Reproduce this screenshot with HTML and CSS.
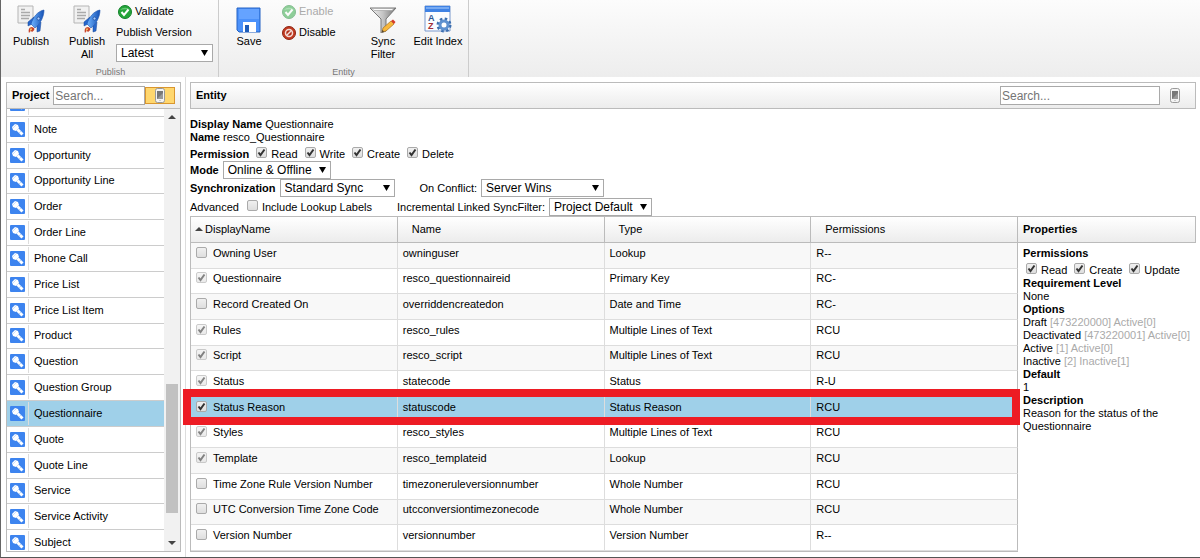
FILE: index.html
```html
<!DOCTYPE html>
<html lang="en">
  <head>
    <meta charset="UTF-8" />
    <meta name="viewport" content="width=device-width, initial-scale=1.0" />
    <title>Entity - Questionnaire</title>
    <link rel="stylesheet" href="styles.css">
  </head>
  <body>
    <!-- Shared icons -->
    <svg class="defs" aria-hidden="true">
      <defs>
        <linearGradient id="blue" x1="0" y1="0" x2="1" y2="0">
          <stop offset="0" stop-color="#6fb4ff" />
          <stop offset="1" stop-color="#1450b4" />
        </linearGradient>
        <linearGradient id="grey" x1="0" y1="0" x2="1" y2="0">
          <stop offset="0" stop-color="#f4f4f4" />
          <stop offset="0.5" stop-color="#c4c4c4" />
          <stop offset="1" stop-color="#777" />
        </linearGradient>
        <symbol id="publish" viewBox="0 0 28 28">
          <path d="M1 1h15v17H1z" fill="#f1f1f1" stroke="#b5b5b5" />
          <path d="M4 4.500h4M4 7.500h9M4 10.500h9M4 13.500h8" stroke="#aaa" stroke-width="1.500" />
          <path d="M15 22c-3 0-4 3-3 6 1-1 1-2 2-2l1 1c2-1 3-3 2-4z" fill="#c8452c" />
          <path d="M14 23c-1 1-1 2-1 3 1-1 2-1 2-2z" fill="#ffd36b" />
          <path d="M17 12l-6 5v4l6-3zM24 17l-1 9-3 1v-6z" fill="#2767cc" stroke="#174796" stroke-width=".5" />
          <path d="M27 5c-6 1-11 7-13 14l4 4c5-4 9-11 9-18z" fill="url(#blue)" stroke="#1c54ae" stroke-width=".6" />
          <circle cx="21.500" cy="13.500" r="1.500" fill="#a9ccff" stroke="#174796" stroke-width=".7" />
        </symbol>
        <symbol id="ok" viewBox="0 0 14 14">
          <circle cx="7" cy="7" r="6.500" fill="#25a53a" stroke="#12822a" />
          <path d="M2 5a6 5 0 0 1 10 0c-3-1-7-1-10 0z" fill="#7fd68a" opacity=".7" />
          <path d="M3.500 7l2.500 3 4.500-5.500" fill="none" stroke="#fff" stroke-width="2" />
        </symbol>
        <symbol id="phone" viewBox="0 0 10 15">
          <rect x=".5" y=".5" width="9" height="14" rx="2" fill="#f3f3f3" stroke="#999" />
          <path d="M2 3h6v8H2z" fill="#777" />
          <path d="M2 11l6-6v6z" fill="#999" />
          <path d="M4 12.500h2" stroke="#ccc" />
        </symbol>
        <symbol id="entity" viewBox="0 0 15 15">
          <rect width="15" height="15" rx="1" fill="#3d84ef" />
          <path d="M2 5l3-3 3 1 1 3-3 3-3-1z" fill="#fff" />
          <path d="M2.500 6.500l4-4" stroke="#a9cbfb" stroke-width=".6" />
          <path d="M7.500 7.500l5 5" stroke="#fff" stroke-width="3" />
          <path d="M9 11l2-2" stroke="#a9cbfb" stroke-width=".7" />
        </symbol>
      </defs>
    </svg>

    <!-- Ribbon Section -->
    <header class="ribbon">
      <section class="group">
        <div class="tools">
          <button class="tool"><svg class="icon-lg"><use href="#publish" /></svg>Publish</button>
          <button class="tool"><svg class="icon-lg"><use href="#publish" /></svg>Publish<br />All</button>
          <div class="tool-list">
            <button class="small-tool"><svg class="icon-sm"><use href="#ok" /></svg>Validate</button>
            <label for="version">Publish Version</label>
            <select id="version"><option>Latest</option></select>
          </div>
        </div>
        <h2>Publish</h2>
      </section>
      <section class="group">
        <div class="tools">
          <button class="tool wide">
            <svg class="icon-lg" viewBox="0 0 28 28">
              <path d="M2 3h23v24H4l-2-2z" fill="#4b91fa" stroke="#2463c4" />
              <path d="M4 4h20v10H4z" fill="#65a3ff" />
              <path d="M8 17h13v10H8z" fill="#fff" />
              <path d="M10 20h4v7h-4z" fill="#1f5cb8" />
            </svg>Save
          </button>
          <div class="tool-list">
            <button class="small-tool" disabled><svg class="icon-sm"><use href="#ok" /></svg>Enable</button>
            <button class="small-tool">
              <svg class="icon-sm" viewBox="0 0 14 14">
                <circle cx="7" cy="7" r="6.500" fill="#c23b22" stroke="#8e2412" />
                <circle cx="7" cy="7" r="3.500" fill="#b3311b" stroke="#f3ddd8" stroke-width="1.500" />
                <path d="M4.500 9.500l5-5" stroke="#f3ddd8" stroke-width="1.500" />
              </svg>Disable
            </button>
          </div>
          <button class="tool narrow">
            <svg class="icon-lg" viewBox="0 0 28 28">
              <path d="M1 3h26L17 14v12l-5 2V14z" fill="url(#grey)" stroke="#777" />
              <path d="M3 3.500h22l-2 2H5z" fill="#fafafa" stroke="#999" stroke-width=".6" />
              <path d="M13 27l1-4 8-7 3 3-8 7z" fill="#f8b83c" stroke="#a7701d" stroke-width=".7" />
              <path d="M22 16l2-1.500 2.500 2.500-1.500 2z" fill="#d63b28" />
              <path d="M13 27l.5-2 1.500 1.500z" fill="#333" />
            </svg>Sync<br />Filter
          </button>
          <button class="tool wide">
            <svg class="icon-lg" viewBox="0 0 28 28">
              <path d="M1 1h25v25H1z" fill="#fafcff" stroke="#7898cc" />
              <path d="M1 1h25v6H1z" fill="#3f82e4" />
              <path d="M2 2h23v2H2z" fill="#77aaf2" />
              <text class="az-a" x="4" y="16">A</text>
              <text class="az-z" x="4" y="24">Z</text>
              <circle cx="20" cy="20" r="6" fill="none" stroke="#3c6eae" stroke-width="3" stroke-dasharray="2.400 2.310" />
              <circle cx="20" cy="20" r="4" fill="#fff" stroke="#5f91cf" stroke-width="3" />
            </svg>Edit Index
          </button>
        </div>
        <h2>Entity</h2>
      </section>
    </header>

    <div class="workspace">
      <!-- Sidebar Section -->
      <aside class="sidebar">
        <div class="bar project-bar">
          <label for="projectSearch">Project</label>
          <input type="text" id="projectSearch" placeholder="Search..." />
          <button class="phone-btn active" aria-label="Mobile"><svg class="icon-phone"><use href="#phone" /></svg></button>
        </div>
        <div class="list-area">
          <ul class="entity-list" id="entityList"></ul>
          <div class="scrollbar">
            <span class="arrow up"></span>
            <span class="thumb"></span>
            <span class="arrow down"></span>
          </div>
        </div>
      </aside>

      <!-- Entity Section -->
      <main class="main-content">
        <div class="bar entity-bar">
          <h1>Entity</h1>
          <input type="text" aria-label="Search fields" placeholder="Search..." />
          <button class="phone-btn" aria-label="Mobile"><svg class="icon-phone"><use href="#phone" /></svg></button>
        </div>

        <form class="entity-form">
          <div><b>Display Name</b> Questionnaire</div>
          <div><b>Name</b> resco_Questionnaire</div>
          <div class="checks">
            <b>Permission</b>
            <label><input type="checkbox" checked />Read</label>
            <label><input type="checkbox" checked />Write</label>
            <label><input type="checkbox" checked />Create</label>
            <label><input type="checkbox" checked />Delete</label>
          </div>
          <div class="field-row">
            <label for="mode"><b>Mode</b></label>
            <select id="mode"><option>Online &amp; Offline</option></select>
          </div>
          <div class="field-row">
            <label for="sync"><b>Synchronization</b></label>
            <select id="sync" class="medium"><option>Standard Sync</option></select>
            <label for="conflict" class="spaced">On Conflict:</label>
            <select id="conflict" class="large"><option>Server Wins</option></select>
          </div>
          <div class="field-row advanced">
            <span>Advanced</span>
            <label class="lookup"><input type="checkbox" />Include Lookup Labels</label>
            <label for="filter" class="spaced">Incremental Linked SyncFilter:</label>
            <select id="filter"><option>Project Default</option></select>
          </div>
        </form>

        <div class="details">
          <div class="table-wrap">
            <table>
              <thead>
                <tr>
                  <th><span class="arrow up"></span>DisplayName</th>
                  <th>Name</th>
                  <th>Type</th>
                  <th>Permissions</th>
                </tr>
              </thead>
              <tbody id="fieldTable"></tbody>
            </table>
          </div>
          <aside class="properties">
            <h2 class="bar">Properties</h2>
            <div class="props">
              <h3>Permissions</h3>
              <div class="checks">
                <label><input type="checkbox" checked />Read</label>
                <label><input type="checkbox" checked />Create</label>
                <label><input type="checkbox" checked />Update</label>
              </div>
              <h3>Requirement Level</h3>
              <p>None</p>
              <h3>Options</h3>
              <p>Draft <span>[473220000] Active[0]</span></p>
              <p>Deactivated <span>[473220001] Active[0]</span></p>
              <p>Active <span>[1] Active[0]</span></p>
              <p>Inactive <span>[2] Inactive[1]</span></p>
              <h3>Default</h3>
              <p>1</p>
              <h3>Description</h3>
              <p>Reason for the status of the Questionnaire</p>
            </div>
          </aside>
        </div>
      </main>
    </div>

    <script src="script.js"></script>
  </body>
</html>
```

FILE: styles.css
```css
/* Reset default styles */
* {
  margin: 0;
  padding: 0;
  box-sizing: border-box;
}

body {
  font-family: "Liberation Sans", Arial, sans-serif;
  font-size: 11px;
  line-height: 13px;
  color: #000;
  background: #fff;
  height: 100vh;
  display: flex;
  flex-direction: column;
  border-left: 1px solid #666;
  border-bottom: 1px solid #555;
}

button,
input,
select {
  font-family: inherit;
  font-size: 11px;
  line-height: 13px;
  color: #000;
}

h1,
h2,
h3 {
  font-size: 11px;
}

svg {
  display: block;
  flex: none;
}

.defs {
  position: absolute;
  width: 0;
  height: 0;
}

/* Form controls */
select {
  appearance: none;
  height: 18px;
  padding: 0 18px 0 4px;
  font-size: 12px;
  border: 1px solid #a9a9a9;
  background: #fff url("data:image/svg+xml,%3Csvg xmlns='http://www.w3.org/2000/svg' width='7' height='6'%3E%3Cpath d='M0 0h7L3.500 6z'/%3E%3C/svg%3E") no-repeat right 4px center;
}

select.medium {
  width: 115px;
}

select.large {
  width: 123px;
}

input[type="text"] {
  height: 19px;
  padding: 0 1px;
  font-size: 12px;
  border: 1px solid #a9a9a9;
  background: #fff;
}

input[type="text"]::placeholder {
  color: #757575;
}

input[type="checkbox"] {
  appearance: none;
  flex: none;
  width: 11px;
  height: 11px;
  border: 1px solid #aaa;
  border-radius: 2px;
  background: linear-gradient(#f0f0f0, #dedede);
}

input[type="checkbox"]:checked {
  background: url("data:image/svg+xml,%3Csvg xmlns='http://www.w3.org/2000/svg' width='9' height='9'%3E%3Cpath d='M1.500 4.500l2 2.500 4-5.500' fill='none' stroke='%23333' stroke-width='2'/%3E%3C/svg%3E") no-repeat center, linear-gradient(#f0f0f0, #dedede);
}

input[type="checkbox"]:disabled {
  opacity: 0.6;
}

/* Ribbon */
.ribbon {
  display: flex;
  flex: none;
  height: 77px;
  background: linear-gradient(#fcfcfc, #ededed);
}

.group {
  display: flex;
  flex-direction: column;
  justify-content: space-between;
  padding-left: 2px;
  border-right: 1px solid #ccc;
}

.group + .group {
  padding-left: 0;
}

.group h2 {
  font-size: 9px;
  line-height: 10px;
  font-weight: normal;
  text-align: center;
  color: #777;
}

.tools {
  display: flex;
  align-items: flex-start;
}

.tool {
  display: flex;
  flex-direction: column;
  align-items: center;
  width: 56px;
  padding-top: 5px;
  border: none;
  background: none;
}

.tool.wide {
  width: 60px;
}

.tool.narrow {
  width: 50px;
}

.icon-lg {
  width: 28px;
  height: 28px;
  margin-bottom: 2px;
}

.az-a,
.az-z {
  font-size: 9px;
  font-weight: bold;
  fill: #2d5692;
}

.az-z {
  fill: #a32d35;
}

.tool-list {
  display: flex;
  flex-direction: column;
  padding: 4px 5px 0 1px;
  gap: 6px;
}

.tool-list select {
  width: 97px;
  margin-top: -2px;
}

.tool-list label {
  height: 15px;
  line-height: 15px;
}

.group + .group .tool-list {
  width: 79px;
}

.small-tool {
  display: flex;
  align-items: center;
  gap: 3px;
  height: 15px;
  padding-left: 2px;
  border: none;
  background: none;
}

.small-tool:disabled {
  color: #aaa;
}

.small-tool:disabled svg {
  opacity: 0.5;
}

.icon-sm {
  width: 14px;
  height: 14px;
}

/* Workspace */
.workspace {
  display: flex;
  flex: 1;
  min-height: 0;
}

.bar {
  display: flex;
  flex: none;
  align-items: center;
  height: 27px;
  padding: 0 5px;
  border: 1px solid #bbb;
  background: linear-gradient(#fff, #ececec);
}

.phone-btn {
  display: flex;
  align-items: center;
  justify-content: center;
  width: 30px;
  height: 17px;
  border: 1px solid transparent;
  background: none;
}

.phone-btn.active {
  border-color: #d9962f;
  background: #ffd76e;
}

.icon-phone {
  width: 10px;
  height: 15px;
}

/* Sidebar */
.sidebar {
  display: flex;
  flex: none;
  flex-direction: column;
  width: 175px;
  margin: 5px;
  margin-right: 0;
}

.project-bar label {
  font-weight: bold;
}

.project-bar input {
  flex: 1;
  min-width: 0;
  margin-left: 4px;
}

.list-area {
  display: flex;
  flex: 1;
  min-height: 0;
  overflow: hidden;
  border: 1px solid #bbb;
  border-top: none;
}

/* The list is scrolled part of the way through its first and last rows */
.entity-list {
  display: grid;
  flex: 1;
  grid-auto-rows: 1fr;
  margin: -18px 0 -5px;
  list-style: none;
}

.entity-list li {
  display: flex;
  min-height: 0;
  border-bottom: 1px solid #ccc;
}

.entity-list a {
  display: flex;
  flex: 1;
  align-items: center;
  color: #000;
  text-decoration: none;
}

.entity-list svg {
  width: 15px;
  height: 15px;
  margin: 0 3px;
}

.entity-list span {
  align-self: stretch;
  display: flex;
  align-items: center;
  margin: 1px 0;
  padding-left: 5px;
  border-left: 1px solid #ddd;
}

.entity-list .active {
  background: #9fd0e9;
}

.scrollbar {
  display: flex;
  flex-direction: column;
  align-items: center;
  width: 16px;
  padding: 6px 0;
  background: #f1f1f1;
}

.thumb {
  width: 12px;
  height: 30%;
  margin: auto 0 28px;
  background: #c1c1c1;
}

.arrow {
  border: 4px solid transparent;
}

.arrow.up {
  border-top: none;
  border-bottom-color: #444;
}

.arrow.down {
  border-bottom: none;
  border-top-color: #444;
}

/* Main content */
.main-content {
  display: flex;
  flex: 1;
  flex-direction: column;
  min-width: 0;
  padding: 5px 4px;
  margin-left: 4px;
  border-left: 1px solid #ddd;
}

.entity-bar h1 {
  flex: 1;
}

.entity-bar input {
  width: 160px;
}

.entity-form {
  padding-top: 9px;
}

.checks {
  display: flex;
  align-items: flex-end;
  gap: 7px;
  height: 17px;
}

.checks label,
.lookup {
  display: flex;
  align-items: flex-end;
  gap: 4px;
}

.checks input,
.lookup input {
  margin-bottom: 3px;
}

.field-row {
  display: flex;
  align-items: center;
  gap: 4px;
}

.field-row.advanced {
  margin-top: 1px;
}

.field-row .spaced {
  margin-left: 21px;
}

.advanced .lookup {
  margin-left: 4px;
}

/* Field table and properties */
.details {
  display: flex;
  flex: 1;
  min-height: 0;
}

.table-wrap {
  flex: 1;
  min-width: 0;
  border: 1px solid #bbb;
  border-right: none;
}

table {
  width: 100%;
  height: 100%;
  table-layout: fixed;
  border-collapse: separate;
  border-spacing: 0;
}

th {
  height: 26px;
  padding-left: 14px;
  font-weight: normal;
  text-align: left;
  border-right: 1px solid #bbb;
  border-bottom: 1px solid #bbb;
  background: linear-gradient(#fff, #ececec);
}

th:first-child {
  padding-left: 4px;
}

th .arrow {
  display: inline-block;
  margin: 0 2px 2px 0;
  vertical-align: middle;
}

td {
  padding: 0 0 4px 5px;
  border-right: 1px solid #ddd;
  border-bottom: 1px solid #ddd;
}

td:last-child {
  border-right-color: #bbb;
}

td label {
  display: flex;
  align-items: center;
  gap: 6px;
}

td input {
  margin-bottom: 2px;
}

tbody tr:nth-child(odd) {
  background: #f8f8f8;
}

tbody tr.selected {
  position: relative;
  background: #9fd0e9;
}

/* Red frame around the selected field */
tr.selected td:first-child::after {
  content: "";
  position: absolute;
  inset: -8px -2px -2px -8px;
  border: 8px solid #ed1c24;
}

.properties {
  flex: none;
  width: 178px;
}

.properties .bar {
  border-left: none;
}

.props {
  padding: 4px 5px;
}

.props .checks {
  padding-left: 3px;
}

.props p span {
  color: #aaa;
}
```

FILE: script.js
```js
const entities = [
  "", "Note", "Opportunity", "Opportunity Line", "Order", "Order Line",
  "Phone Call", "Price List", "Price List Item", "Product", "Question",
  "Question Group", "Questionnaire", "Quote", "Quote Line", "Service",
  "Service Activity", "Subject",
];

// name, logical name, type, permissions, checkbox state
const fields = [
  ["Owning User", "owninguser", "Lookup", "R--", ""],
  ["Questionnaire", "resco_questionnaireid", "Primary Key", "RC-", "checked disabled"],
  ["Record Created On", "overriddencreatedon", "Date and Time", "RC-", ""],
  ["Rules", "resco_rules", "Multiple Lines of Text", "RCU", "checked disabled"],
  ["Script", "resco_script", "Multiple Lines of Text", "RCU", "checked disabled"],
  ["Status", "statecode", "Status", "R-U", "checked disabled"],
  ["Status Reason", "statuscode", "Status Reason", "RCU", "checked"],
  ["Styles", "resco_styles", "Multiple Lines of Text", "RCU", "checked disabled"],
  ["Template", "resco_templateid", "Lookup", "RCU", "checked disabled"],
  ["Time Zone Rule Version Number", "timezoneruleversionnumber", "Whole Number", "RCU", ""],
  ["UTC Conversion Time Zone Code", "utcconversiontimezonecode", "Whole Number", "RCU", ""],
  ["Version Number", "versionnumber", "Version Number", "R--", ""],
];

document.getElementById("entityList").innerHTML = entities
  .map(
    (name) => `
      <li class="${name === "Questionnaire" ? "active" : ""}">
        <a href="#"><svg><use href="#entity" /></svg><span>${name}</span></a>
      </li>`
  )
  .join("");

document.getElementById("fieldTable").innerHTML = fields
  .map(
    ([label, name, type, permissions, state]) => `
      <tr class="${name === "statuscode" ? "selected" : ""}">
        <td><label><input type="checkbox" ${state} />${label}</label></td>
        <td>${name}</td>
        <td>${type}</td>
        <td>${permissions}</td>
      </tr>`
  )
  .join("");
```
